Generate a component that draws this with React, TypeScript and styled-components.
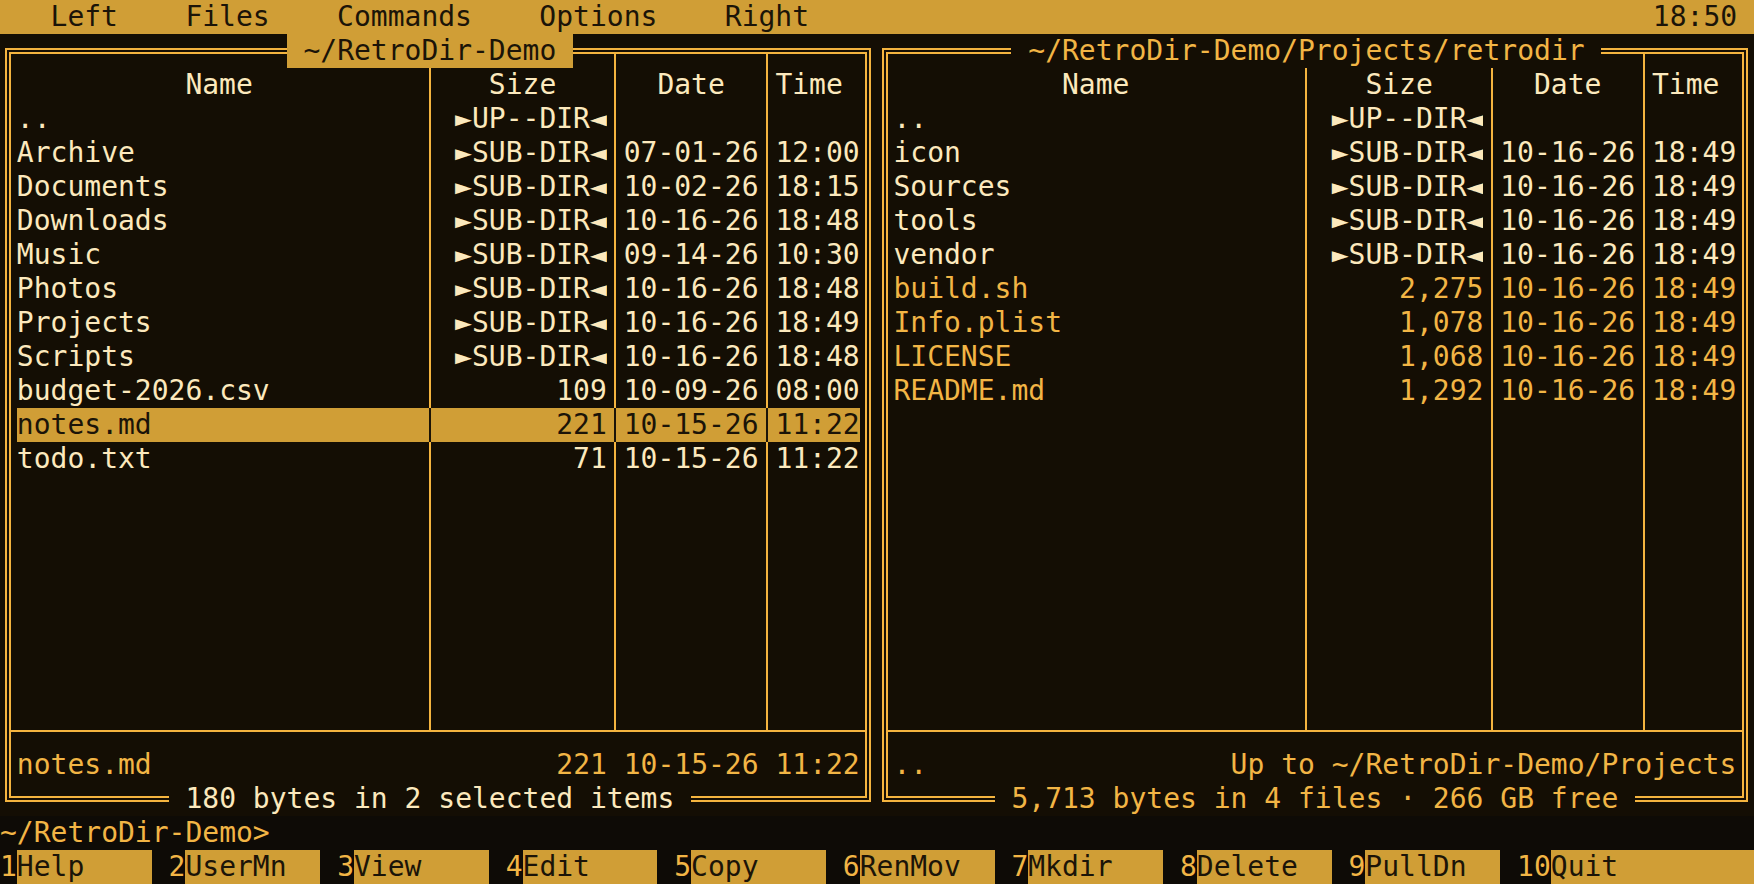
import React from 'react'
import styled, { createGlobalStyle } from 'styled-components'

const GOLD = '#d09e36'
const LINE = '#f4b43f'
const CREAM = '#fce9bd'
const AMBER = '#f2b545'
const INK = '#1b1408'
const BG = '#140e04'
const BG_DARK = '#0e0b06'

const GlobalStyle = createGlobalStyle`
  html, body {
    margin: 0;
    padding: 0;
    background: ${BG_DARK};
  }
  body {
    font-family: "DejaVu Sans Mono", "Liberation Mono", monospace;
    font-size: 28px;
    line-height: 34px;
  }
  * {
    box-sizing: border-box;
  }
`

const Screen = styled.div`
  width: 1754px;
  height: 884px;
  overflow: hidden;
  display: flex;
  flex-direction: column;
  white-space: pre;
  background: ${BG};
`

// MENU BAR

const MenuBar = styled.div`
  height: 34px;
  display: flex;
  padding: 0 1ch;
  background: ${GOLD};
  color: ${INK};
`

const MenuItem = styled.div`
  padding: 0 2ch;
`

const Clock = styled.div`
  margin-left: auto;
`

// PANELS

const Panels = styled.div`
  height: 782px;
  display: flex;
  background: ${BG};
`

const Panel = styled.div`
  position: relative;
  width: 52ch;
  height: 100%;
  padding: 14px calc(0.5ch - 3px);
`

const Frame = styled.div`
  height: 100%;
  display: flex;
  flex-direction: column;
  border: 6px double ${LINE};
  padding: 0 calc(0.5ch - 3px) 14px;
`

const Title = styled.div<{ $col: number; $active?: boolean; $bottom?: boolean; $color: string }>`
  position: absolute;
  ${(p) => (p.$bottom ? 'bottom: 0;' : 'top: 0;')}
  left: ${(p) => p.$col}ch;
  height: 34px;
  background: ${(p) => (p.$active ? GOLD : BG)};
  color: ${(p) => (p.$active ? INK : p.$color)};
`

const ListArea = styled.div`
  flex: 1;
  display: flex;
  flex-direction: column;
`

const GridRow = styled.div<{ $h?: number; $selected?: boolean; $grow?: boolean; $color?: string }>`
  display: grid;
  grid-template-columns: 24ch 1ch 10ch 1ch 8ch 1ch 5ch;
  height: ${(p) => (p.$h !== undefined ? `${p.$h}px` : '34px')};
  ${(p) => (p.$grow ? 'flex: 1;' : '')}
  background: ${(p) => (p.$selected ? GOLD : 'transparent')};
  color: ${(p) => (p.$selected ? INK : p.$color || CREAM)};
`

const Sep = styled.div<{ $dark?: boolean }>`
  display: flex;
  justify-content: center;

  &::before {
    content: '';
    width: 2px;
    background: ${(p) => (p.$dark ? INK : LINE)};
  }
`

const Cell = styled.div<{ $align?: string }>`
  overflow: hidden;
  text-align: ${(p) => p.$align || 'left'};
`

const HRule = styled.div`
  height: 2px;
  margin: 0 calc(3px - 0.5ch);
  background: ${LINE};
`

const InfoRow = styled.div`
  height: 34px;
  margin-top: 16px;
  display: flex;
  justify-content: space-between;
  color: ${AMBER};
`

// COMMAND LINE + KEYS

const Prompt = styled.div`
  height: 34px;
  background: ${BG_DARK};
  color: ${AMBER};
`

const KeyBar = styled.div`
  height: 34px;
  display: flex;
  background: ${BG_DARK};
`

const Key = styled.div<{ $last?: boolean }>`
  display: flex;
  ${(p) => (p.$last ? 'flex: 1;' : 'width: 10ch;')}
`

const KeyNum = styled.span`
  color: ${AMBER};
`

const KeyLabel = styled.span<{ $last?: boolean }>`
  ${(p) => (p.$last ? 'flex: 1;' : 'width: 8ch;')}
  background: ${GOLD};
  color: ${INK};
`

type Entry = {
  name: string
  size: string
  date?: string
  time?: string
  file?: boolean
  selected?: boolean
}

type PanelData = {
  path: string
  active?: boolean
  entries: Entry[]
  infoLeft: string
  infoRight: string
  status: string
  statusColor: string
  fileColor: string
}

const UP = '\u25BAUP--DIR\u25C4'
const SUB = '\u25BASUB-DIR\u25C4'

const leftPanel: PanelData = {
  path: '~/RetroDir-Demo',
  active: true,
  entries: [
    { name: '..', size: UP },
    { name: 'Archive', size: SUB, date: '07-01-26', time: '12:00' },
    { name: 'Documents', size: SUB, date: '10-02-26', time: '18:15' },
    { name: 'Downloads', size: SUB, date: '10-16-26', time: '18:48' },
    { name: 'Music', size: SUB, date: '09-14-26', time: '10:30' },
    { name: 'Photos', size: SUB, date: '10-16-26', time: '18:48' },
    { name: 'Projects', size: SUB, date: '10-16-26', time: '18:49' },
    { name: 'Scripts', size: SUB, date: '10-16-26', time: '18:48' },
    { name: 'budget-2026.csv', size: '109', date: '10-09-26', time: '08:00', file: true },
    { name: 'notes.md', size: '221', date: '10-15-26', time: '11:22', file: true, selected: true },
    { name: 'todo.txt', size: '71', date: '10-15-26', time: '11:22', file: true },
  ],
  infoLeft: 'notes.md',
  infoRight: '221 10-15-26 11:22',
  status: '180 bytes in 2 selected items',
  statusColor: CREAM,
  fileColor: CREAM,
}

const rightPanel: PanelData = {
  path: '~/RetroDir-Demo/Projects/retrodir',
  entries: [
    { name: '..', size: UP },
    { name: 'icon', size: SUB, date: '10-16-26', time: '18:49' },
    { name: 'Sources', size: SUB, date: '10-16-26', time: '18:49' },
    { name: 'tools', size: SUB, date: '10-16-26', time: '18:49' },
    { name: 'vendor', size: SUB, date: '10-16-26', time: '18:49' },
    { name: 'build.sh', size: '2,275', date: '10-16-26', time: '18:49', file: true },
    { name: 'Info.plist', size: '1,078', date: '10-16-26', time: '18:49', file: true },
    { name: 'LICENSE', size: '1,068', date: '10-16-26', time: '18:49', file: true },
    { name: 'README.md', size: '1,292', date: '10-16-26', time: '18:49', file: true },
  ],
  infoLeft: '..',
  infoRight: 'Up to ~/RetroDir-Demo/Projects',
  status: '5,713 bytes in 4 files \u00B7 266 GB free',
  statusColor: AMBER,
  fileColor: AMBER,
}

const keys = ['Help', 'UserMn', 'View', 'Edit', 'Copy', 'RenMov', 'Mkdir', 'Delete', 'PullDn', 'Quit']

const EmptyRow = ({ h, grow }: { h?: number; grow?: boolean }) => (
  <GridRow $h={h} $grow={grow}>
    <div />
    <Sep />
    <div />
    <Sep />
    <div />
    <Sep />
    <div />
  </GridRow>
)

const FilePanel = ({ data }: { data: PanelData }) => {
  const titleText = ` ${data.path} `
  const statusText = ` ${data.status} `
  return (
    <Panel>
      <Frame>
        <ListArea>
          <EmptyRow h={14} />
          <GridRow>
            <Cell $align="center">Name</Cell>
            <Sep />
            <Cell $align="center">Size</Cell>
            <Sep />
            <Cell $align="center">Date</Cell>
            <Sep />
            <Cell>Time</Cell>
          </GridRow>
          {data.entries.map((e) => (
            <GridRow key={e.name} $selected={e.selected} $color={e.file ? data.fileColor : CREAM}>
              <Cell>{e.name}</Cell>
              <Sep $dark={e.selected} />
              <Cell $align="right">{e.size}</Cell>
              <Sep $dark={e.selected} />
              <Cell>{e.date || ''}</Cell>
              <Sep $dark={e.selected} />
              <Cell>{e.time || ''}</Cell>
            </GridRow>
          ))}
          <EmptyRow grow />
        </ListArea>
        <HRule />
        <InfoRow>
          <span>{data.infoLeft}</span>
          <span>{data.infoRight}</span>
        </InfoRow>
      </Frame>
      <Title $col={Math.floor((52 - titleText.length) / 2)} $active={data.active} $color={AMBER}>
        {titleText}
      </Title>
      <Title $bottom $col={Math.floor((52 - statusText.length) / 2)} $color={data.statusColor}>
        {statusText}
      </Title>
    </Panel>
  )
}

export default function App() {
  return (
    <Screen>
      <GlobalStyle />
      <MenuBar>
        <MenuItem>Left</MenuItem>
        <MenuItem>Files</MenuItem>
        <MenuItem>Commands</MenuItem>
        <MenuItem>Options</MenuItem>
        <MenuItem>Right</MenuItem>
        <Clock>18:50</Clock>
      </MenuBar>
      <Panels>
        <FilePanel data={leftPanel} />
        <FilePanel data={rightPanel} />
      </Panels>
      <Prompt>~/RetroDir-Demo&gt;</Prompt>
      <KeyBar>
        {keys.map((k, i) => (
          <Key key={k} $last={i === keys.length - 1}>
            <KeyNum>{i + 1}</KeyNum>
            <KeyLabel $last={i === keys.length - 1}>{k}</KeyLabel>
          </Key>
        ))}
      </KeyBar>
    </Screen>
  )
}
